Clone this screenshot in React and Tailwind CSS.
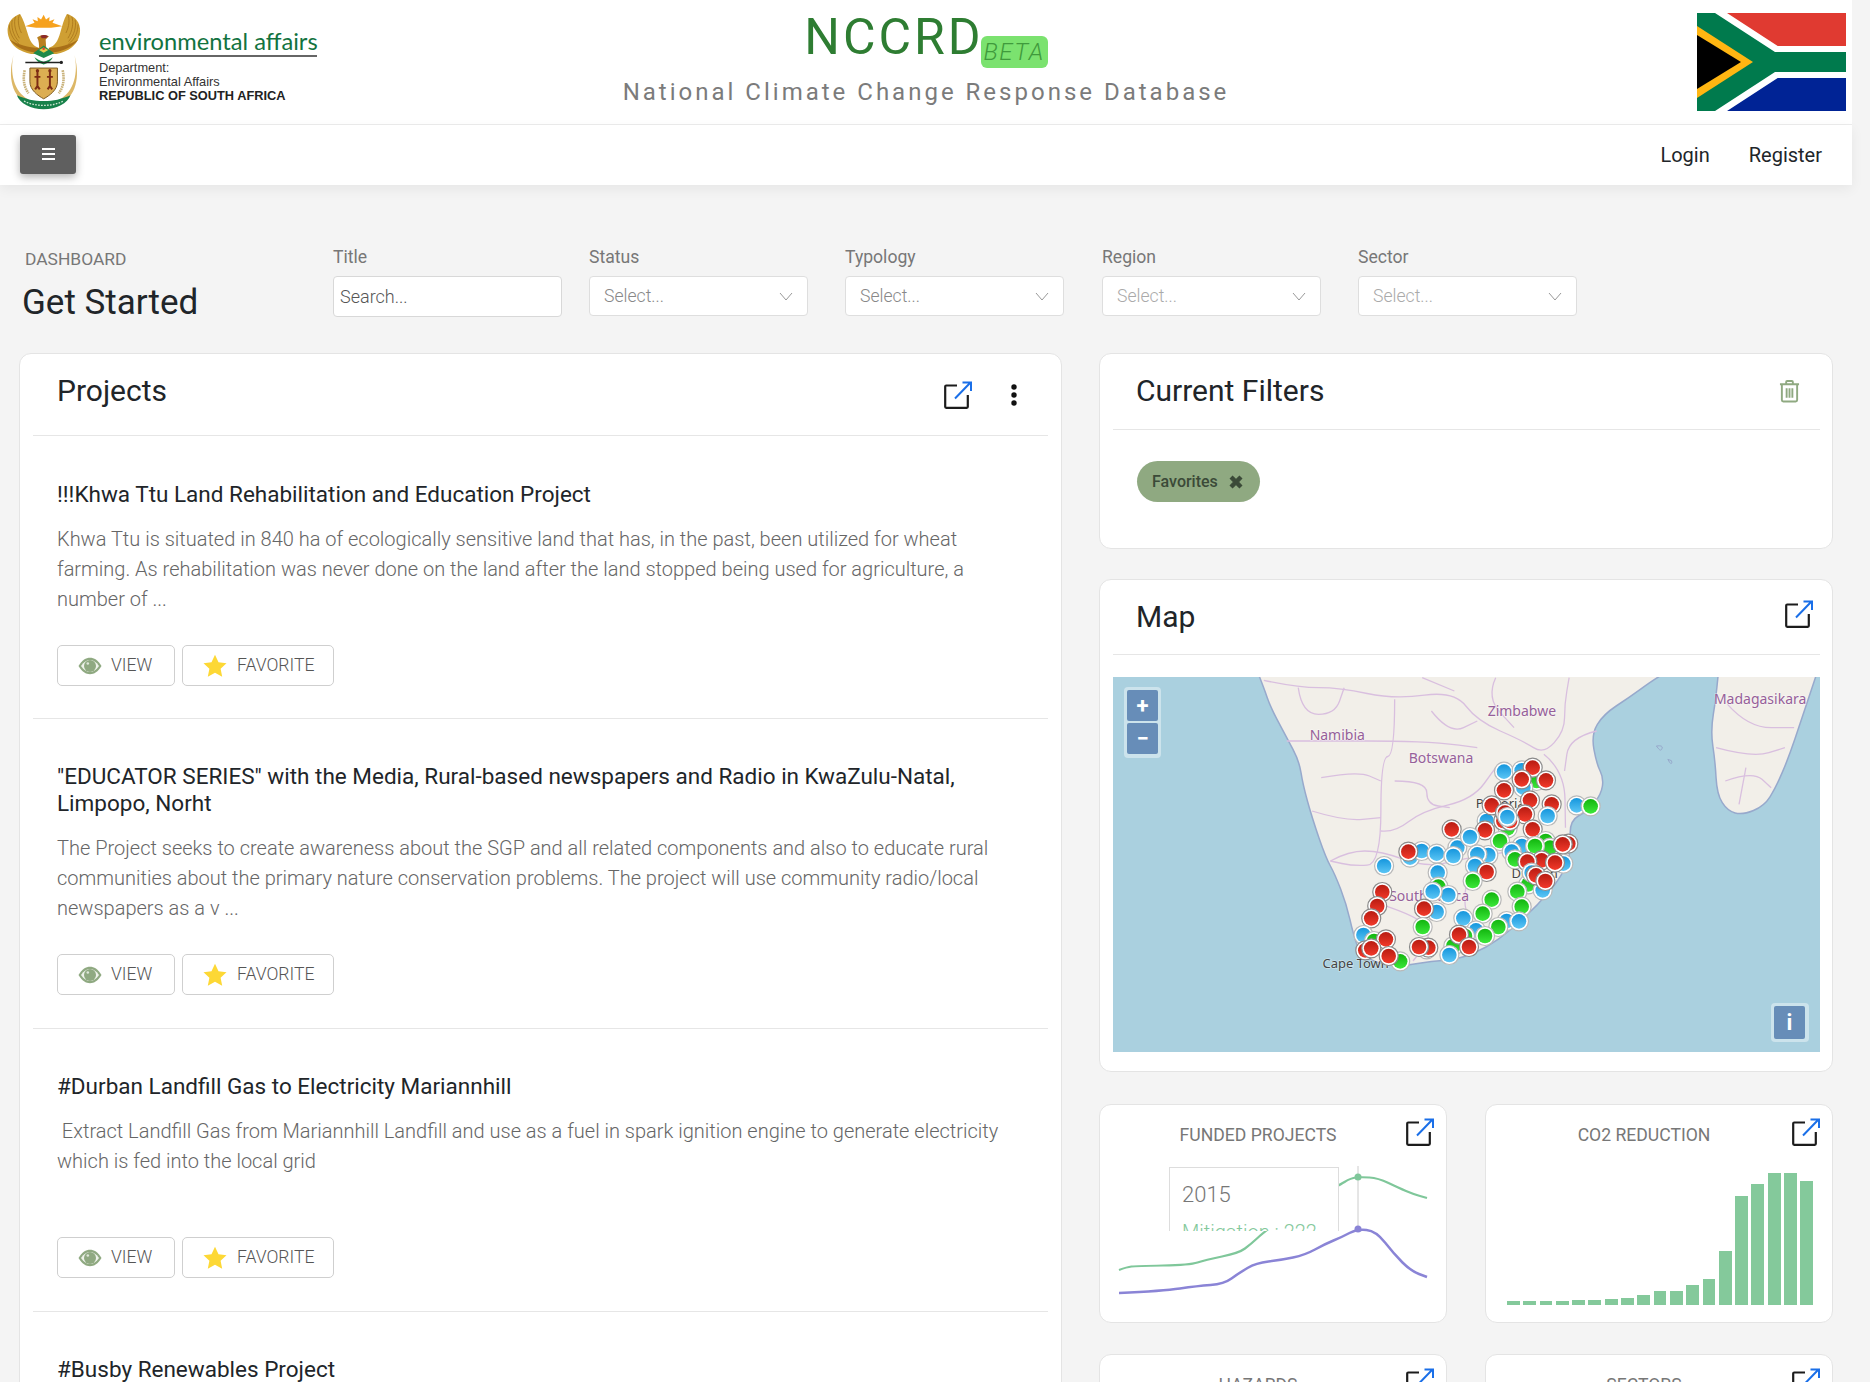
import React from "react";

const ExternalIcon = ({ className = "w-[28px] h-[28px]" }) => (
  <svg viewBox="0 0 28 28" className={className} fill="none">
    <path d="M13 4.5H2.200a1 1 0 0 0-1 1v20.300a1 1 0 0 0 1 1h20.600a1 1 0 0 0 1-1V14" stroke="#1c1c1c" strokeWidth="2.200" />
    <path d="M11 17.500L26 2M18.500 1.500H27V10" stroke="#1a6fe8" strokeWidth="2" />
  </svg>
);

const Eye = () => (
  <svg viewBox="0 0 24 18" className="w-[24px] h-[18px]">
    <path d="M.5 9C4 3 8 .8 12 .8S20 3 23.500 9C20 15 16 17.200 12 17.200S4 15 .5 9z" fill="#8fa981" />
    <path d="M3 9c2.800-4.300 5.800-6 9-6s6.200 1.700 9 6c-2.800 4.300-5.800 6-9 6s-6.200-1.700-9-6z" fill="#eef2ea" />
    <circle cx="12" cy="9" r="6" fill="#8fa981" />
    <circle cx="9.800" cy="6.500" r="1.300" fill="#dfe8da" />
  </svg>
);

const Star = () => (
  <svg viewBox="0 0 24 24" className="w-[24px] h-[24px]">
    <path d="M12 .8l3.500 7.400 8 1-5.900 5.500 1.600 8L12 18.800l-7.200 3.900 1.600-8L.5 9.200l8-1z" fill="#fdd835" />
  </svg>
);

const feathers = [
  "M58 42c-6 14-4 36 6 56",
  "M46 48c-6 18-2 44 12 66",
  "M36 58c-4 20 2 46 20 66",
  "M27 72c0 20 8 44 30 60",
];

const CoatOfArms = () => (
  <svg viewBox="20 38 226 294" className="w-[74px] h-[97px]">
    <path d="M132 42l7 15 11-8-1 13 16-6-6 11 30 10-34 5h-46l-33-5 28-10-6-11 16 6-1-13 11 8z" fill="#f6a21e" />
    <path d="M60 40C42 46 26 58 22 84c-2 24 10 50 34 64 20 10 38 16 58 14l4-18c-20-6-28-20-36-48-6-20-12-40-22-56z" fill="#cf9f33" />
    <path d="M204 40c18 6 36 18 39 44 2 24-10 50-34 64-20 10-38 16-58 14l-4-18c20-6 28-20 36-48 6-20 10-40 20-56z" fill="#cf9f33" />
    {feathers.map((d, i) => (
      <path key={i} d={d} stroke="#a9761b" strokeWidth="2.500" fill="none" />
    ))}
    {feathers.map((d, i) => (
      <path key={i} d={d} stroke="#a9761b" strokeWidth="2.500" fill="none" transform="matrix(-1 0 0 1 264 0)" />
    ))}
    <path d="M28 118c18 24 50 38 86 40l4-14c-32-2-66-10-90-26zM238 118c-18 24-50 38-86 40l-4-14c32-2 66-10 90-26z" fill="#a86f18" />
    <path d="M112 112c6-8 24-10 36-4l-10 10 2 30h-22c0-14 0-26-6-36z" fill="#b97f1f" />
    <path d="M122 106c6-3 18-3 24 2l-8 6h-12z" fill="#8c2a2a" />
    <path d="M132 136l32 24-32 14-32-14z" fill="#1e8a4a" />
    <path d="M118 150l14-8 14 8-14 8z" fill="#e8c94a" />
    <circle cx="132" cy="146" r="4" fill="#d9452d" />
    <path d="M104 172c8 6 14 10 28 14 14-4 20-8 28-14-4 10-14 18-28 22-14-4-24-12-28-22z" fill="#1e8a4a" />
    <path d="M76 188h112" stroke="#222" strokeWidth="4" />
    <circle cx="186" cy="188" r="5" fill="#222" />
    <path d="M40 165c-12 52 0 112 46 136l-6 10C26 285 26 215 40 165zM226 165c12 52 0 112-46 136l6 10c54-26 54-96 40-146z" fill="#dcb766" />
    <path d="M90 205h84v42c0 25-24 42-42 52-18-10-42-27-42-52z" fill="#dcae52" stroke="#7c5a20" strokeWidth="3" />
    <path d="M113 215v52M151 215v52M104 232h18M142 232h18M106 270l7-10 7 10M144 270l7-10 7 10" stroke="#7d2c14" strokeWidth="6" fill="none" />
    <circle cx="113" cy="213" r="5" fill="#7d2c14" />
    <circle cx="151" cy="213" r="5" fill="#7d2c14" />
    <path d="M74 212c-6 28-2 52 12 70M190 212c6 28 2 52-12 70" stroke="#c9b27a" strokeWidth="8" strokeDasharray="5 2" fill="none" />
    <path d="M50 288c30 12 50 18 82 18s52-6 82-18c-8 24-44 43-82 43s-74-19-82-43z" fill="#17814a" />
    <path d="M72 306c18 9 38 13 60 13s42-4 60-13" stroke="#cfe6d2" strokeWidth="4" strokeDasharray="5 4" fill="none" />
  </svg>
);

const Flag = () => (
  <svg viewBox="0 0 149 98" className="w-[149px] h-[98px]" preserveAspectRatio="none">
    <rect width="149" height="33" fill="#e03a31" />
    <rect y="65" width="149" height="33" fill="#002395" />
    <rect y="33" width="149" height="32" fill="#fff" />
    <path d="M0 0h30l60 39h59v20H90L30 98H0z" fill="#fff" />
    <path d="M0 0h18l60 39h71v20H78L18 98H0z" fill="#007a4d" />
    <path d="M0 13l56 36L0 85z" fill="#ffb612" />
    <path d="M0 22l44 27L0 76z" fill="#000" />
  </svg>
);

const z4 = (x, y) => [x / 2.178 - 3, y / 3 - 6];
const z5 = (x, y) => [287 + x / 3, 64 + y / 3];

// rounds off a list of points with quadratic curves through the midpoints
const smooth = (list) => {
  let d = `M${list[0][0]} ${list[0][1]}`;
  for (let i = 1; i < list.length - 1; i++) {
    const mx = (list[i][0] + list[i + 1][0]) / 2;
    const my = (list[i][1] + list[i + 1][1]) / 2;
    d += ` Q${list[i][0]} ${list[i][1]} ${mx} ${my}`;
  }
  const last = list[list.length - 1];
  return `${d} L${last[0]} ${last[1]}`;
};
const mapPath = (list) => smooth(list.map(([x, y]) => z4(x, y)));

const africa = [[322, 5], [335, 50], [350, 110], [385, 200], [412, 270], [420, 340], [440, 440], [470, 560], [490, 610], [515, 700], [530, 790], [545, 850], [590, 880], [640, 885], [700, 870], [760, 865], [820, 830], [870, 780], [930, 705], [985, 615], [1005, 540], [1000, 450], [1040, 420], [1070, 370], [1075, 320], [1060, 280], [1048, 190], [1075, 130], [1130, 80], [1180, 30], [1210, 5]];
const madagascar = [[1325, 5], [1320, 80], [1308, 180], [1318, 270], [1322, 370], [1345, 420], [1378, 432], [1425, 405], [1450, 350], [1478, 260], [1505, 150], [1540, 5]];

const borders = [
  [[620, 85], [620, 255], [590, 258], [590, 580], [530, 585], [480, 570]],
  [[335, 28], [410, 50], [500, 50], [620, 85], [750, 60], [800, 150], [900, 210], [945, 250], [990, 180], [990, 100], [1000, 20]],
  [[750, 60], [680, 20]],
  [[590, 480], [620, 485], [680, 420], [790, 385], [840, 290]],
  [[945, 250], [990, 300], [992, 470]],
  [[410, 50], [418, 130], [490, 130], [510, 50]],
  [[385, 210], [500, 210], [620, 210], [720, 215], [800, 230]],
  [[460, 320], [540, 300], [590, 330]],
  [[620, 330], [690, 330], [690, 400], [740, 410]],
  [[480, 570], [520, 540], [590, 540], [690, 590], [780, 560], [880, 540]],
  [[590, 700], [680, 740], [700, 800], [660, 870]],
  [[1320, 230], [1400, 260], [1470, 230]],
  [[1340, 330], [1400, 300], [1440, 350]],
  [[1060, 180], [1000, 200], [990, 300]],
  [[1345, 100], [1390, 170], [1490, 170]],
  [[1385, 290], [1370, 400]],
  [[840, 20], [820, 80], [880, 170]],
  [[440, 420], [510, 450], [590, 440]],
  [[700, 120], [740, 190], [800, 150]],
  [[780, 620], [760, 720], [830, 800]],
];

const c = { r: "url(#mr)", g: "url(#mg)", b: "url(#mb)" };

const markers = [
  ["b", 312, 92], ["b", 365, 88], ["g", 410, 120], ["b", 370, 140], ["r", 398, 80], ["r", 365, 115], ["r", 438, 118], ["r", 312, 148],
  ["r", 390, 178], ["r", 455, 190], ["b", 530, 193], ["g", 572, 196], ["b", 443, 225], ["b", 260, 240], ["r", 275, 193], ["g", 323, 262],
  ["r", 375, 220], ["r", 310, 240], ["r", 330, 240], ["r", 315, 215], ["b", 322, 228], ["r", 398, 265], ["r", 255, 268], ["r", 155, 265],
  ["b", 172, 320], ["b", 210, 288], ["g", 300, 300], ["b", 265, 342], ["b", 232, 340], ["b", 30, 350], ["b", 65, 330], ["b", 110, 338],
  ["b", 160, 345], ["r", 25, 332], ["b", 365, 315], ["g", 437, 300], ["g", 450, 320], ["g", 405, 315], ["b", 335, 332], ["g", 345, 355],
  ["r", 505, 308], ["r", 488, 310], ["b", 490, 368], ["r", 425, 358], ["r", 465, 365], ["r", 382, 362], ["b", 225, 375], ["r", 260, 393],
  ["g", 218, 420], ["b", 113, 395], ["g", 115, 437], ["b", 145, 462], ["b", 98, 452], ["g", 385, 430], ["b", 428, 448], ["b", 395, 395], ["r", 408, 403],
  ["r", 436, 420], ["g", 352, 452], ["g", 365, 497], ["g", 275, 476], ["g", 248, 518], ["b", 110, 513], ["r", 72, 503], ["b", 190, 532],
  ["b", 320, 540], ["b", 357, 541], ["g", 68, 558], ["b", 228, 568], ["g", 295, 558], ["g", 195, 585], ["g", 160, 615], ["g", 255, 585],
  ["r", 177, 581], ["r", 207, 618], ["b", 148, 642], ["b", 80, 625], ["r", 85, 620], ["r", 57, 618],
].map(([k, x, y]) => [k, ...z5(x, y)]);

const westMarkers = [
  ["b", 597, 585], ["r", 593, 663], ["r", 582, 705], ["r", 569, 742], ["b", 552, 792], ["g", 575, 810], ["r", 601, 805], ["r", 556, 838],
  ["r", 569, 832], ["g", 632, 871], ["r", 607, 855],
].map(([k, x, y]) => [k, ...z4(x, y)]);

const labels = [
  ["Namibia", 495, 192, "#96609a", 14],
  ["Zimbabwe", 897, 120, "#96609a", 14],
  ["Botswana", 721, 260, "#96609a", 14],
  ["Madagasikara", 1416, 83, "#96609a", 14],
  ["South Africa", 695, 674, "#96609a", 14],
  ["Pretoria", 850, 395, "#444", 13],
  ["Durban", 925, 605, "#444", 13],
  ["Cape Town", 535, 876, "#444", 13],
];

const MapCanvas = () => (
  <svg viewBox="0 0 707 375" className="w-full h-full block">
    <defs>
      <linearGradient id="mr" x1="0" y1="0" x2="0" y2="1"><stop offset="0" stopColor="#b81c12" /><stop offset="1" stopColor="#f2392a" /></linearGradient>
      <linearGradient id="mg" x1="0" y1="0" x2="0" y2="1"><stop offset="0" stopColor="#12b50f" /><stop offset="1" stopColor="#3ce83a" /></linearGradient>
      <linearGradient id="mb" x1="0" y1="0" x2="0" y2="1"><stop offset="0" stopColor="#1596dd" /><stop offset="1" stopColor="#5cc6f5" /></linearGradient>
    </defs>
    <rect width="707" height="375" fill="#aad0df" />
    <path d={mapPath(africa)} fill="#f2efe9" stroke="#97a9cc" strokeWidth="1.500" />
    <path d={mapPath(madagascar)} fill="#f2efe9" stroke="#97a9cc" strokeWidth="1.500" />
    <path d={mapPath([[1190, 225], [1205, 222], [1200, 242], [1190, 225]])} fill="none" stroke="#97a9cc" />
    <path d={mapPath([[1215, 265], [1226, 268], [1222, 282], [1215, 265]])} fill="none" stroke="#97a9cc" />
    {borders.map((b, i) => (
      <path key={i} d={mapPath(b)} fill="none" stroke="#d9bfdf" strokeWidth="1.300" />
    ))}
    {labels.map(([t, x, y, fill, size]) => {
      const [px, py] = z4(x, y);
      return (
        <text key={t} x={px} y={py + 5} textAnchor="middle" fill={fill} stroke="#ffffff" strokeOpacity="0.4" strokeWidth="1.500" paintOrder="stroke" fontSize={size} fontFamily="'Noto Sans', sans-serif">
          {t}
        </text>
      );
    })}
    {[...westMarkers, ...markers].map(([k, x, y], i) => (
      <g key={i}>
        <circle cx={x} cy={y} r="9.500" fill="#fff" stroke={k === "r" ? "#8a8a8a" : "#b9b9b9"} strokeWidth="1.200" />
        <circle cx={x} cy={y} r="7.300" fill={c[k]} />
      </g>
    ))}
  </svg>
);

const MapButton = ({ children, className = "" }) => (
  <div className={`w-[31px] bg-[#678db8] rounded-[2px] flex items-center justify-center text-white font-bold text-[22px] leading-none ${className}`}>
    {children}
  </div>
);

const greenLine = [[1120, 1269], [1128, 1266], [1137, 1265], [1191, 1264], [1206, 1259], [1240, 1252], [1252, 1243], [1265, 1231], [1300, 1205], [1339, 1185], [1352, 1177], [1362, 1176], [1379, 1177], [1400, 1187], [1414, 1193], [1428, 1197]];
const purpleLine = [[1120, 1292], [1164, 1290], [1198, 1285], [1225, 1283], [1240, 1272], [1257, 1262], [1282, 1259], [1306, 1254], [1326, 1243], [1343, 1236], [1358, 1228], [1377, 1230], [1395, 1253], [1412, 1270], [1428, 1276]];

const FundedChart = () => (
  <div className="relative h-[158px]">
    <svg viewBox="0 0 346 158" className="w-full h-full block" fill="none">
      <g transform="translate(-1101 -1160)">
        <path d={smooth(greenLine)} stroke="#7fc79a" strokeWidth="2.200" />
        <path d={smooth(purpleLine)} stroke="#8a84d6" strokeWidth="2.500" />
        <line x1="1359" y1="1165" x2="1359" y2="1230" stroke="#cccccc" />
        <circle cx="1359" cy="1176" r="3.500" fill="#7fc79a" />
        <circle cx="1359" cy="1228" r="3.500" fill="#8a84d6" />
      </g>
    </svg>
    <div className="absolute left-[69px] top-[6px] w-[170px] h-[64px] bg-white border-l border-r border-t border-[#dddddd] overflow-hidden px-[12px] pt-[14px]">
      <div className="text-[22px] leading-[26px] text-[#777] font-light">2015</div>
      <div className="mt-[12px] text-[20px] leading-[24px] text-[#84c99b] font-light whitespace-nowrap">Mitigation : 222</div>
    </div>
  </div>
);

const barTops = [598, 598, 598, 598, 596, 595, 591, 588, 580, 567, 568, 551, 532, 449, 282, 247, 215, 215, 238];

const Co2Chart = () => (
  <div className="h-[158px] flex items-end gap-[3.500px] pl-[21px] pb-[14px]">
    {barTops.map((t, i) => (
      <div key={i} className="w-[12.800px] bg-[#84c99b]" style={{ height: (610 - t) / 3 }} />
    ))}
  </div>
);

const Select = ({ label, light, className = "mr-[37px]" }) => (
  <div className={`w-[219px] ${className}`}>
    <div className="text-[17.600px] leading-[20px] text-[#777] mb-[9px]">{label}</div>
    <div className="h-[40px] bg-white border border-[#dedede] rounded-[4px] flex items-center justify-between pl-[14px] pr-[14px]">
      <span className={`text-[17.600px] font-light ${light ? "text-[#aaa]" : "text-[#888]"}`}>Select...</span>
      <svg viewBox="0 0 14 9" className="w-[14px] h-[9px]" fill="none">
        <path d="M1 1l6 7 6-7" stroke="#999" />
      </svg>
    </div>
  </div>
);

const ActionButton = ({ icon, label, className }) => (
  <button className={`h-[41px] bg-white border border-[#cfcfcf] rounded-[5px] flex items-center text-[#555] text-[17.600px] font-light ${className}`}>
    {icon}
    <span>{label}</span>
  </button>
);

const Project = ({ title, text, className }) => (
  <div className={`px-[24px] ${className}`}>
    <h3 className="text-[22.500px] leading-[27px] text-[#212529] w-[963px]">{title}</h3>
    {text && (
      <p className="mt-[16px] w-[963px] min-h-[90px] text-[20px] leading-[30px] font-light text-[#666]">{text}</p>
    )}
    {text && (
      <div className="mt-[31px] flex gap-[7px]">
        <ActionButton className="w-[118px] pl-[20px] gap-[9px]" icon={<Eye />} label="VIEW" />
        <ActionButton className="w-[152px] pl-[20px] gap-[10px]" icon={<Star />} label="FAVORITE" />
      </div>
    )}
  </div>
);

const SmallCard = ({ title, children, className = "" }) => (
  <div className={`relative bg-white border border-[#e4e4e4] rounded-[12px] ${className}`}>
    <div className="h-[56px] flex items-center justify-center pt-[4px] pr-[30px] text-[17.600px] text-[#777] font-normal">{title}</div>
    <div className="absolute right-[12px] top-[13px]"><ExternalIcon /></div>
    {children}
  </div>
);

export default function App() {
  return (
    <div className="h-[1382px] overflow-hidden bg-[#f4f4f4] font-['Roboto',sans-serif]">
      <div className="w-[1852px]">
        <header className="h-[125px] bg-white border-b border-[#ececec] grid grid-cols-[1fr_auto_1fr] items-start">
          <div className="flex pl-[7px] pt-[13px]">
            <CoatOfArms />
            <div className="ml-[18px] pt-[15px] font-['Liberation_Sans',sans-serif]">
              <div className="w-[218px] h-[29px] border-b-2 border-[#666] text-[23.700px] leading-[26px] text-[#12733f] font-['Lato',sans-serif] whitespace-nowrap">environmental affairs</div>
              <div className="mt-[4px] text-[12.800px] leading-[14px] text-[#333]">Department:</div>
              <div className="text-[12.800px] leading-[14px] text-[#333]">Environmental Affairs</div>
              <div className="text-[12.800px] leading-[14px] font-bold text-[#222]">REPUBLIC OF SOUTH AFRICA</div>
            </div>
          </div>
          <div className="flex flex-col items-center">
            <div className="flex items-start h-[70px] pt-[8px]">
              <span className="text-[50px] leading-[58px] tracking-[3px] text-[#2e7d32]">NCCRD</span>
              <span className="mt-[28px] -ml-[3px] h-[32px] w-[67px] rounded-[6px] bg-[#7be26f] text-center text-[24px] leading-[32px] tracking-[1.500px] italic font-light text-[#3f9a3c]">BETA</span>
            </div>
            <div className="mt-[6px] text-[24px] leading-[32px] tracking-[3px] text-[#7b7b7b] whitespace-nowrap">National Climate Change Response Database</div>
          </div>
          <div className="flex justify-end pr-[6px] pt-[13px]">
            <Flag />
          </div>
        </header>

        <nav className="h-[60px] bg-white shadow-[0_4px_12px_rgba(0,0,0,0.06)] flex items-center justify-between pl-[20px] pr-[30px]">
          <button className="w-[56px] h-[39px] mb-[2px] rounded-[3px] bg-[#5f5f5f] shadow-[0_3px_8px_rgba(0,0,0,0.3)] flex flex-col items-center justify-center gap-[2.500px]">
            <span className="w-[13px] h-[2.500px] bg-white" />
            <span className="w-[13px] h-[2.500px] bg-white" />
            <span className="w-[13px] h-[2.500px] bg-white" />
          </button>
          <div className="flex gap-[39px] text-[20px] text-[#212529]">
            <span>Login</span>
            <span>Register</span>
          </div>
        </nav>

        <div className="pl-[19px] pr-[19px]">
          <div className="flex h-[168px] pt-[62px] pl-[1px]">
            <div className="w-[313px] pt-[2px]">
              <div className="pl-[5px] text-[17.400px] leading-[20px] text-[#777]">DASHBOARD</div>
              <div className="pl-[2px] mt-[12px] text-[35px] leading-[44px] text-[#212529]">Get Started</div>
            </div>
            <div className="w-[229px] mr-[27px]">
              <div className="text-[17.600px] leading-[20px] text-[#777] mb-[9px]">Title</div>
              <div className="h-[41px] bg-white border border-[#d8d8d8] rounded-[4px] flex items-center pl-[6px] pb-[1px] text-[18px] font-light text-[#555]">Search...</div>
            </div>
            <Select label="Status" />
            <Select label="Typology" className="mr-[38px]" />
            <Select label="Region" light />
            <Select label="Sector" light />
          </div>

          <div className="flex gap-[37px] items-start">
            <div className="w-[1044px] bg-white border border-[#e4e4e4] rounded-[12px] px-[13px]">
              <div className="h-[82px] border-b border-[#e6e6e6] flex items-start justify-between pl-[24px] pr-[30px] pt-[19px]">
                <h2 className="text-[30px] leading-[36px] text-[#212529]">Projects</h2>
                <div className="flex items-center gap-[38px] pt-[8px]">
                  <ExternalIcon />
                  <svg viewBox="0 0 8 22" className="w-[8px] h-[22px]">
                    <circle cx="4" cy="3" r="2.700" fill="#111" />
                    <circle cx="4" cy="11" r="2.700" fill="#111" />
                    <circle cx="4" cy="19" r="2.700" fill="#111" />
                  </svg>
                </div>
              </div>
              <Project
                className="pt-[45px] pb-[32px] border-b border-[#e6e6e6]"
                title="!!!Khwa Ttu Land Rehabilitation and Education Project"
                text="Khwa Ttu is situated in 840 ha of ecologically sensitive land that has, in the past, been utilized for wheat farming. As rehabilitation was never done on the land after the land stopped being used for agriculture, a number of ..."
              />
              <Project
                className="pt-[44px] pb-[33px] border-b border-[#e6e6e6]"
                title={'"EDUCATOR SERIES" with the Media, Rural-based newspapers and Radio in KwaZulu-Natal, Limpopo, Norht'}
                text="The Project seeks to create awareness about the SGP and all related components and also to educate rural communities about the primary nature conservation problems. The project will use community radio/local newspapers as a v ..."
              />
              <Project
                className="pt-[44px] pb-[33px] border-b border-[#e6e6e6]"
                title="#Durban Landfill Gas to Electricity Mariannhill"
                text={"\u00a0Extract Landfill Gas from Mariannhill Landfill and use as a fuel in spark ignition engine to generate electricity which is fed into the local grid"}
              />
              <Project className="pt-[44px] pb-[60px]" title="#Busby Renewables Project" />
            </div>

            <div className="w-[734px] flex flex-col gap-[30px]">
              <div className="h-[196px] bg-white border border-[#e4e4e4] rounded-[12px] pl-[13px] pr-[12px]">
                <div className="h-[76px] border-b border-[#e6e6e6] flex items-start justify-between pl-[23px] pr-[20px] pt-[19px]">
                  <h2 className="text-[30px] leading-[36px] text-[#212529]">Current Filters</h2>
                  <svg viewBox="0 0 22 24" className="w-[21px] h-[24px] mt-[6px]" fill="none" stroke="#8fa981" strokeWidth="2">
                    <path d="M1 5h20M7.500 5V2.500a1 1 0 0 1 1-1h5a1 1 0 0 1 1 1V5M3 5v16.500a1.500 1.500 0 0 0 1.500 1.500h13a1.500 1.500 0 0 0 1.500-1.500V5M8 9v10M11 9v10M14 9v10" />
                  </svg>
                </div>
                <div className="pl-[24px] pt-[31px]">
                  <div className="inline-flex items-center gap-[10px] h-[41px] w-[123px] rounded-full bg-[#8fa981] pl-[15px] text-[16px] text-[#3b4a38] font-medium">
                    Favorites
                    <svg viewBox="0 0 14 14" className="w-[16px] h-[16px]">
                      <path d="M2 4l2-2 3 3 3-3 2 2-3 3 3 3-2 2-3-3-3 3-2-2 3-3z" fill="#3b4a38" stroke="#3b4a38" />
                    </svg>
                  </div>
                </div>
              </div>

              <div className="h-[493px] bg-white border border-[#e4e4e4] rounded-[12px] pl-[13px] pr-[12px]">
                <div className="h-[75px] border-b border-[#e6e6e6] flex items-start justify-between pl-[23px] pr-[7px] pt-[19px]">
                  <h2 className="text-[30px] leading-[36px] text-[#212529]">Map</h2>
                  <ExternalIcon className="w-[28px] h-[28px] mt-[1px]" />
                </div>
                <div className="relative mt-[22px] h-[375px]">
                  <MapCanvas />
                  <div className="absolute left-[11px] top-[10px] w-[37px] h-[71px] bg-white/40 rounded-[4px] p-[3px] flex flex-col gap-[2px]">
                    <MapButton className="h-[31px]">+</MapButton>
                    <MapButton className="h-[31px]">−</MapButton>
                  </div>
                  <div className="absolute right-[11px] bottom-[10px] w-[38px] h-[39px] bg-white/40 rounded-[4px] p-[3px] flex">
                    <MapButton className="h-[33px]">i</MapButton>
                  </div>
                </div>
              </div>

              <div className="grid grid-cols-[348px_348px] gap-x-[38px] gap-y-[31px] mt-[2px]">
                <SmallCard title="FUNDED PROJECTS" className="h-[219px]">
                  <FundedChart />
                </SmallCard>
                <SmallCard title="CO2 REDUCTION" className="h-[219px]">
                  <Co2Chart />
                </SmallCard>
                <SmallCard title="HAZARDS" className="h-[219px]" />
                <SmallCard title="SECTORS" className="h-[219px]" />
              </div>
            </div>
          </div>
        </div>
      </div>
    </div>
  );
}
